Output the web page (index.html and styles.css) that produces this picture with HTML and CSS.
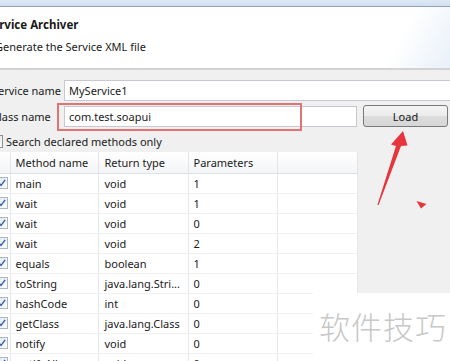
FILE: index.html
```html
<!DOCTYPE html>
<html>
<head>
<meta charset="utf-8">
<link rel="stylesheet" href="styles.css">
</head>
<body>
<div class="page">
  <div class="titlebar"></div>
  <div class="banner">
    <div class="title">Service Archiver</div>
    <div class="subtitle">Generate the Service XML file</div>
  </div>
  <div class="form">
    <span class="lbl lbl-service">Service name</span>
    <div class="input input-wide">MyService1</div>
    <span class="lbl lbl-class">Class name</span>
    <div class="input input-class">com.test.soapui</div>
    <button class="btn">Load</button>
  </div>
  <div class="check-row"><span class="cb"></span><span>Search declared methods only</span></div>
  <table class="methods">
    <colgroup>
      <col class="c-cb"><col class="c-name"><col class="c-ret"><col class="c-par"><col class="c-empty">
    </colgroup>
    <thead>
      <tr><th></th><th>Method name</th><th>Return type</th><th>Parameters</th><th></th></tr>
    </thead>
    <tbody>
      <tr><td class="cbc"><span class="cb checked"><svg viewBox="0 0 12 12"><path d="M2.5 6.2 L4.8 9 L9.8 2.2"/></svg></span></td><td>main</td><td>void</td><td>1</td><td></td></tr>
      <tr><td class="cbc"><span class="cb checked"><svg viewBox="0 0 12 12"><path d="M2.5 6.2 L4.8 9 L9.8 2.2"/></svg></span></td><td>wait</td><td>void</td><td>1</td><td></td></tr>
      <tr><td class="cbc"><span class="cb checked"><svg viewBox="0 0 12 12"><path d="M2.5 6.2 L4.8 9 L9.8 2.2"/></svg></span></td><td>wait</td><td>void</td><td>0</td><td></td></tr>
      <tr><td class="cbc"><span class="cb checked"><svg viewBox="0 0 12 12"><path d="M2.5 6.2 L4.8 9 L9.8 2.2"/></svg></span></td><td>wait</td><td>void</td><td>2</td><td></td></tr>
      <tr><td class="cbc"><span class="cb checked"><svg viewBox="0 0 12 12"><path d="M2.5 6.2 L4.8 9 L9.8 2.2"/></svg></span></td><td>equals</td><td>boolean</td><td>1</td><td></td></tr>
      <tr><td class="cbc"><span class="cb checked"><svg viewBox="0 0 12 12"><path d="M2.5 6.2 L4.8 9 L9.8 2.2"/></svg></span></td><td>toString</td><td>java.lang.Stri...</td><td>0</td><td></td></tr>
      <tr><td class="cbc"><span class="cb checked"><svg viewBox="0 0 12 12"><path d="M2.5 6.2 L4.8 9 L9.8 2.2"/></svg></span></td><td>hashCode</td><td>int</td><td>0</td><td></td></tr>
      <tr><td class="cbc"><span class="cb checked"><svg viewBox="0 0 12 12"><path d="M2.5 6.2 L4.8 9 L9.8 2.2"/></svg></span></td><td>getClass</td><td>java.lang.Class</td><td>0</td><td></td></tr>
      <tr><td class="cbc"><span class="cb checked"><svg viewBox="0 0 12 12"><path d="M2.5 6.2 L4.8 9 L9.8 2.2"/></svg></span></td><td>notify</td><td>void</td><td>0</td><td></td></tr>
      <tr><td class="cbc"><span class="cb checked"><svg viewBox="0 0 12 12"><path d="M2.5 6.2 L4.8 9 L9.8 2.2"/></svg></span></td><td>notifyAll</td><td>void</td><td>0</td><td></td></tr>
    </tbody>
  </table>
  <div class="highlight"></div>
  <svg class="annot" viewBox="0 0 450 361" width="450" height="361">
    <polygon points="403,131 407.5,145.5 401,146 378.6,205 377.4,205 396,146 391,144.5" fill="#e8343c"/>
    <polygon points="416.5,201 426.5,204 421,208.5" fill="#e8343c"/>
  </svg>
  <div class="watermark">软件技巧</div>
</div>
</body>
</html>
```

FILE: styles.css
```css
* { box-sizing: border-box; }
html, body { margin: 0; padding: 0; }
body {
  width: 450px;
  height: 361px;
  overflow: hidden;
  background: #f0f0f0;
  font-family: "Noto Sans", "Open Sans", sans-serif;
  font-size: 11px;
  color: #1a1a1a;
}
.page {
  position: relative;
  width: 450px;
  height: 361px;
  overflow: hidden;
}
.titlebar {
  height: 7px;
  background: linear-gradient(#dde9f5, #cfdff0);
  border-bottom: 1px solid #93a3b5;
}
.banner {
  height: 63px;
  background: linear-gradient(120deg, #ffffff 86%, #e9f0f9 100%);
  border-bottom: 2px solid #d2d2d2;
  padding: 10px 0 0 0;
}
.title {
  font-weight: bold;
  font-size: 11.5px;
  line-height: 16px;
  margin-left: -14px;
  white-space: nowrap;
}
.subtitle {
  margin-top: 6px;
  font-size: 11px;
  line-height: 16px;
  margin-left: -5px;
  white-space: nowrap;
}
.form {
  display: grid;
  grid-template-columns: 63px 293px 85px;
  column-gap: 6px;
  row-gap: 4px;
  margin: 10px 0 0 -5px;
  align-items: start;
}
.lbl {
  line-height: 21px;
  height: 21px;
  white-space: nowrap;
}
.lbl-service {
  margin-left: -3px;
}
.lbl-class {
  line-height: 24px;
  margin-left: -3px;
}
.input {
  background: #fff;
  border: 1px solid #c6cad0;
  height: 21px;
  line-height: 19px;
  padding-left: 4px;
  white-space: nowrap;
}
.input-wide {
  grid-column: 2 / 4;
  margin-right: -12px;
}
.input-class {
  margin-top: 1px;
}
.btn {
  height: 22px;
  font: inherit;
  color: #1a1a1a;
  border: 1px solid #7a7a7a;
  border-radius: 3px;
  background: linear-gradient(#f4f4f4 0%, #ececec 50%, #dddddd 51%, #d6d6d6 100%);
  padding: 0;
}
.check-row {
  display: flex;
  align-items: center;
  gap: 3px;
  margin: 7px 0 0 -10px;
  height: 14px;
  white-space: nowrap;
}
.cb {
  display: inline-block;
  width: 13px;
  height: 13px;
  border: 1px solid #8e8f8f;
  background: linear-gradient(135deg, #dedede, #fbfbfb);
  flex: none;
}
.methods {
  margin: 4px 0 0 -4px;
  width: 361px;
  table-layout: fixed;
  border-collapse: collapse;
  background: #fff;
}
.c-cb { width: 14px; }
.c-name { width: 88px; }
.c-ret { width: 90px; }
.c-par { width: 89px; }
.c-empty { width: 80px; }
.methods th {
  height: 21px;
  font-weight: normal;
  text-align: left;
  padding: 0 0 0 5px;
  background: linear-gradient(#ffffff, #f3f4f6);
  border-right: 1px solid #e2e6ea;
  border-bottom: 1px solid #dde1e6;
  white-space: nowrap;
  overflow: hidden;
}
.methods td {
  height: 20px;
  padding: 0 0 0 5px;
  border-right: 1px solid #e1e8ee;
  border-bottom: 1px solid #eef0f2;
  white-space: nowrap;
  overflow: hidden;
}
.methods td:nth-child(3), .methods th:nth-child(3) { padding-left: 6px; }
.methods td.cbc { padding: 0; vertical-align: middle; }
.cb.checked {
  display: block;
  width: 12px;
  height: 12px;
  border: 1px solid #a9b6c6;
  background: linear-gradient(135deg, #e4e9ef, #fafbfc);
}
.cb.checked svg {
  display: block;
  width: 10px;
  height: 10px;
  fill: none;
  stroke: #2f5ea6;
  stroke-width: 1.6;
}
.highlight {
  position: absolute;
  left: 57px;
  top: 103px;
  width: 245px;
  height: 28px;
  border: 2px solid #e17373;
}
.annot {
  position: absolute;
  left: 0;
  top: 0;
}
.watermark {
  position: absolute;
  left: 313px;
  top: 293px;
  width: 140px;
  height: 70px;
  background: #fff;
  color: #c8c8c8;
  font-family: "Noto Sans CJK SC", sans-serif;
  font-weight: 300;
  font-size: 31px;
  line-height: 34px;
  padding: 16px 0 0 6px;
  letter-spacing: 1px;
}
```
